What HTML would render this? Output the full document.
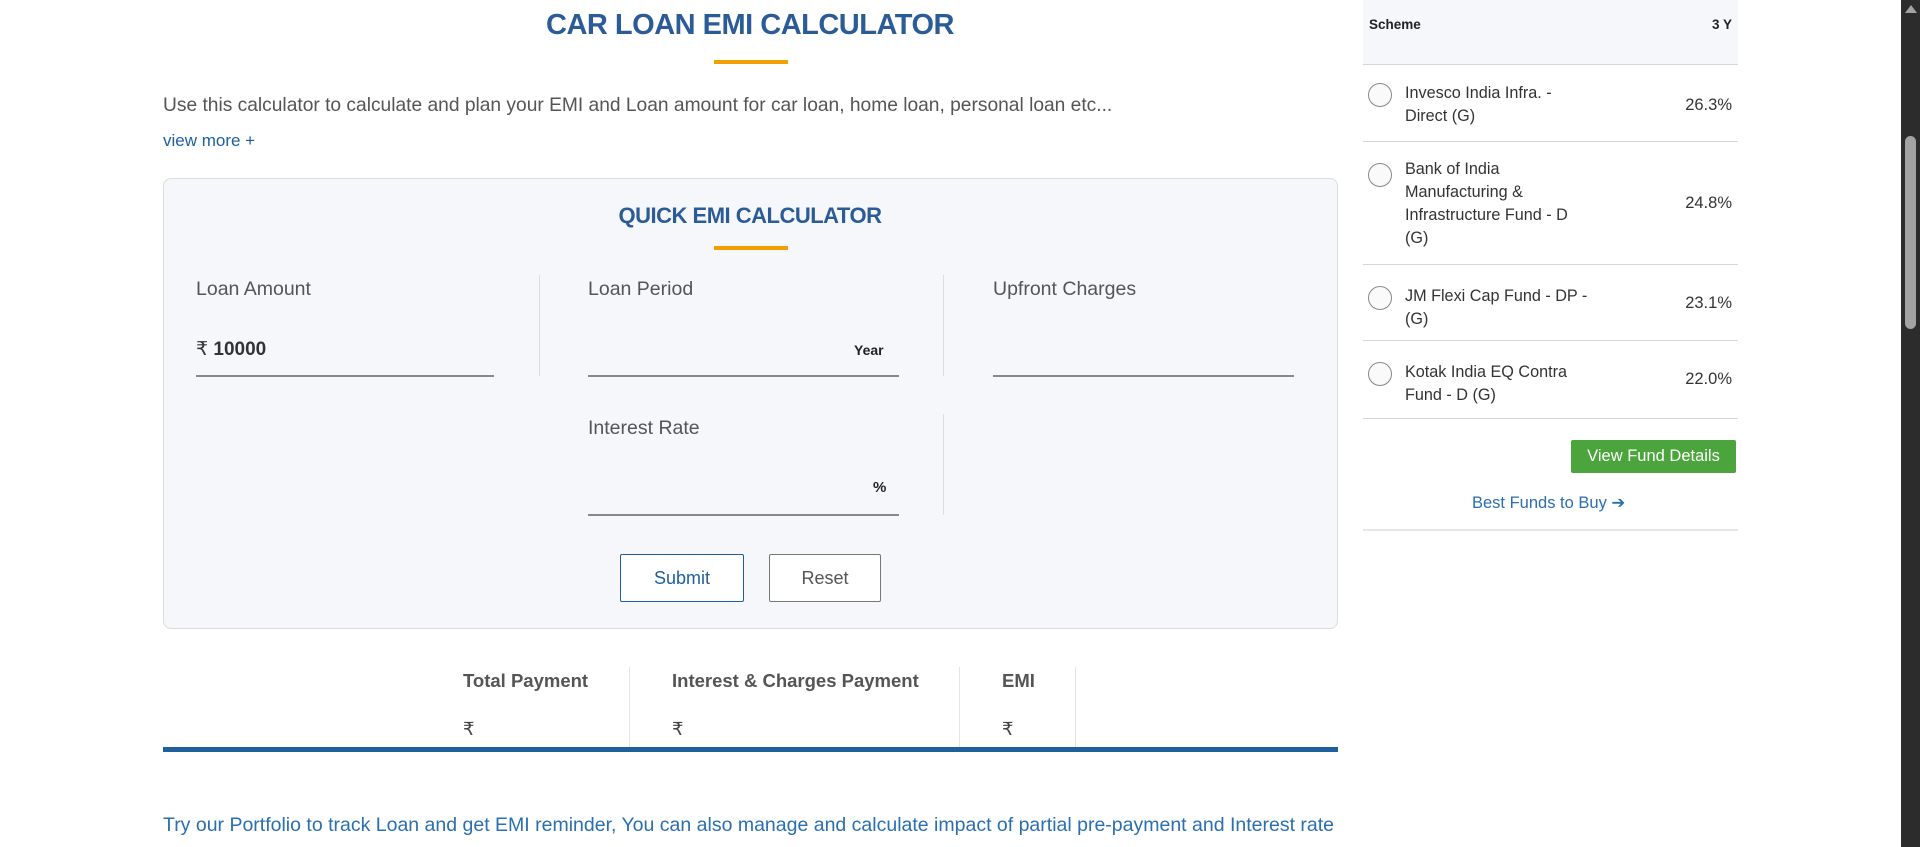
<!DOCTYPE html>
<html><head><meta charset="utf-8"><style>
*{margin:0;padding:0;box-sizing:border-box}
body{width:1920px;height:847px;background:#fff;position:relative;overflow:hidden;font-family:"Liberation Sans",sans-serif}
.a{position:absolute;white-space:nowrap}
.lbl{font-size:19.5px;color:#555}
.line{position:absolute;height:2px;background:#888}
.vd{position:absolute;width:1px;background:#ddd}
.rad{position:absolute;width:24px;height:24px;border:1px solid #888;border-radius:50%;background:#fafafa}
.fn{position:absolute;left:1405px;font-size:16.2px;color:#333;line-height:23px;width:200px}
.pc{position:absolute;right:188px;font-size:16.5px;color:#333}
.hr{position:absolute;left:1363px;width:375px;height:1px;background:#d6d6d6}
</style></head><body>
<div class="a" style="left:500px;width:500px;text-align:center;top:9px;font-size:29px;font-weight:bold;color:#2b5c98;letter-spacing:-0.5px">CAR LOAN EMI CALCULATOR</div>
<div class="a" style="left:714px;top:60px;width:74px;height:4px;background:#f0a000"></div>
<div class="a" style="left:163px;top:95px;font-size:19.2px;color:#555">Use this calculator to calculate and plan your EMI and Loan amount for car loan, home loan, personal loan etc...</div>
<div class="a" style="left:163px;top:131px;font-size:17px;color:#1e5fa0">view more +</div>

<div class="a" style="left:163px;top:178px;width:1175px;height:451px;background:#f5f7fb;border:1px solid #dcdcdc;border-radius:8px"></div>
<div class="a" style="left:500px;width:500px;text-align:center;top:203px;font-size:22px;font-weight:bold;color:#2b5c98;letter-spacing:-0.5px">QUICK EMI CALCULATOR</div>
<div class="a" style="left:714px;top:246px;width:74px;height:4px;background:#f0a000"></div>

<div class="a lbl" style="left:196px;top:278px">Loan Amount</div>
<div class="a lbl" style="left:588px;top:278px">Loan Period</div>
<div class="a lbl" style="left:993px;top:278px">Upfront Charges</div>
<div class="vd" style="left:539px;top:275px;height:101px"></div>
<div class="vd" style="left:943px;top:275px;height:101px"></div>
<div class="a" style="left:196px;top:338px;font-size:19px;color:#333">₹ <b>10000</b></div>
<div class="a" style="left:854px;top:342px;font-size:14px;color:#222;font-weight:bold">Year</div>
<div class="line" style="left:196px;top:375px;width:298px"></div>
<div class="line" style="left:588px;top:375px;width:311px"></div>
<div class="line" style="left:993px;top:375px;width:301px"></div>

<div class="a lbl" style="left:588px;top:417px">Interest Rate</div>
<div class="vd" style="left:943px;top:414px;height:101px"></div>
<div class="a" style="left:873px;top:479px;font-size:15px;color:#222;font-weight:bold">%</div>
<div class="line" style="left:588px;top:514px;width:311px"></div>

<div class="a" style="left:620px;top:554px;width:124px;height:48px;border:1px solid #1e5fa0;border-radius:2px;background:#fff;color:#1e5fa0;font-size:18px;text-align:center;line-height:46px">Submit</div>
<div class="a" style="left:769px;top:554px;width:112px;height:48px;border:1px solid #777;border-radius:2px;background:#fff;color:#555;font-size:18px;text-align:center;line-height:46px">Reset</div>

<div class="a" style="left:463px;top:670px;font-size:18.5px;color:#555;font-weight:bold">Total Payment</div>
<div class="a" style="left:672px;top:670px;font-size:18.5px;color:#555;font-weight:bold">Interest &amp; Charges Payment</div>
<div class="a" style="left:1002px;top:670px;font-size:18.5px;color:#555;font-weight:bold">EMI</div>
<div class="vd" style="left:629px;top:667px;height:80px;background:#e4e4e4"></div>
<div class="vd" style="left:959px;top:667px;height:80px;background:#e4e4e4"></div>
<div class="vd" style="left:1075px;top:667px;height:80px;background:#e4e4e4"></div>
<div class="a" style="left:463px;top:719px;font-size:18px;color:#444">₹</div>
<div class="a" style="left:672px;top:719px;font-size:18px;color:#444">₹</div>
<div class="a" style="left:1002px;top:719px;font-size:18px;color:#444">₹</div>
<div class="a" style="left:163px;top:747px;width:1175px;height:5px;background:#1f5f9e"></div>
<div class="a" style="left:163px;top:814px;font-size:19.5px;color:#2a6fb0">Try our Portfolio to track Loan and get EMI reminder, You can also manage and calculate impact of partial pre-payment and Interest rate</div>

<div class="a" style="left:1363px;top:0;width:375px;height:64px;background:#f5f7fa"></div>
<div class="a" style="left:1369px;top:17px;font-size:13.5px;font-weight:bold;color:#222">Scheme</div>
<div class="a" style="left:1700px;top:17px;width:32px;text-align:right;font-size:13.5px;font-weight:bold;color:#222">3 Y</div>
<div class="hr" style="top:64px"></div>
<div class="rad" style="left:1368px;top:83px"></div>
<div class="fn" style="top:82px">Invesco India Infra. -<br>Direct (G)</div>
<div class="pc" style="top:96px">26.3%</div>
<div class="hr" style="top:141px"></div>
<div class="rad" style="left:1368px;top:163px"></div>
<div class="fn" style="top:158px">Bank of India<br>Manufacturing &amp;<br>Infrastructure Fund - D<br>(G)</div>
<div class="pc" style="top:194px">24.8%</div>
<div class="hr" style="top:264px"></div>
<div class="rad" style="left:1368px;top:286px"></div>
<div class="fn" style="top:285px">JM Flexi Cap Fund - DP -<br>(G)</div>
<div class="pc" style="top:294px">23.1%</div>
<div class="hr" style="top:340px"></div>
<div class="rad" style="left:1368px;top:362px"></div>
<div class="fn" style="top:361px">Kotak India EQ Contra<br>Fund - D (G)</div>
<div class="pc" style="top:370px">22.0%</div>
<div class="hr" style="top:418px"></div>
<div class="a" style="left:1571px;top:440px;width:165px;height:33px;background:#4ba53c;border-radius:2px;color:#fff;font-size:16.5px;text-align:center;line-height:33px">View Fund Details</div>
<div class="a" style="left:1472px;top:493px;font-size:16.5px;color:#2a6fb0">Best Funds to Buy ➔</div>
<div class="hr" style="top:529px;height:2px;background:#e6e6e6"></div>

<div class="a" style="left:1901px;top:0;width:19px;height:847px;background:#2c2c2c"></div>
<div class="a" style="left:1905px;top:5px;width:0;height:0;border-left:6px solid transparent;border-right:6px solid transparent;border-bottom:8px solid #a3a3a3"></div>
<div class="a" style="left:1905px;top:136px;width:11px;height:193px;background:#a3a3a3;border-radius:6px"></div>
</body></html>
